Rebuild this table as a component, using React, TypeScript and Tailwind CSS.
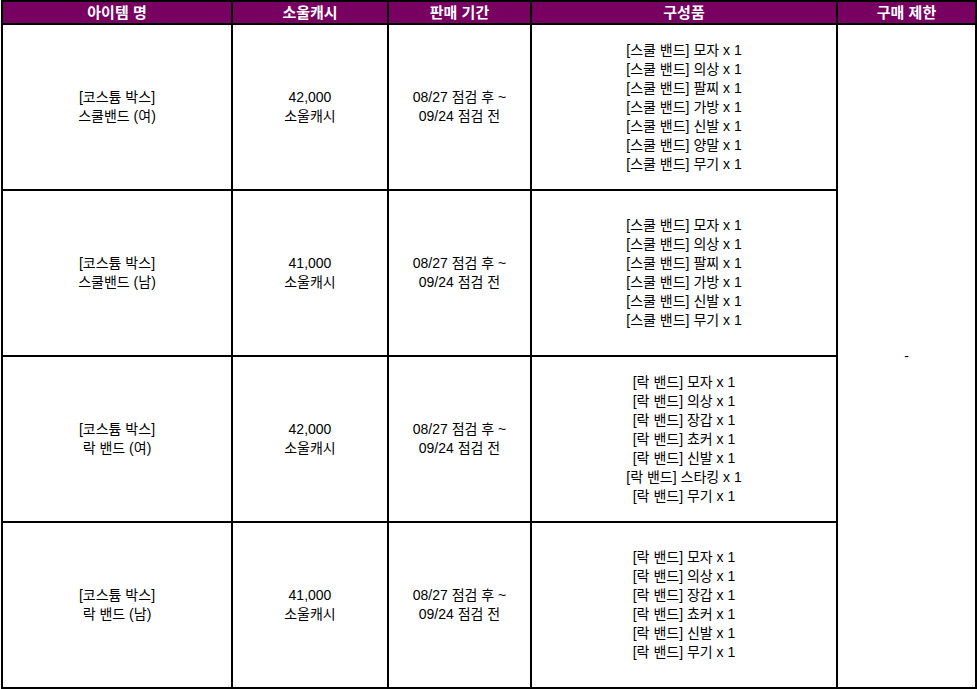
const rows = [
  {
    name: ["[코스튬 박스]", "스쿨밴드 (여)"],
    price: "42,000",
    items: ["[스쿨 밴드] 모자 x 1", "[스쿨 밴드] 의상 x 1", "[스쿨 밴드] 팔찌 x 1", "[스쿨 밴드] 가방 x 1", "[스쿨 밴드] 신발 x 1", "[스쿨 밴드] 양말 x 1", "[스쿨 밴드] 무기 x 1"],
  },
  {
    name: ["[코스튬 박스]", "스쿨밴드 (남)"],
    price: "41,000",
    items: ["[스쿨 밴드] 모자 x 1", "[스쿨 밴드] 의상 x 1", "[스쿨 밴드] 팔찌 x 1", "[스쿨 밴드] 가방 x 1", "[스쿨 밴드] 신발 x 1", "[스쿨 밴드] 무기 x 1"],
  },
  {
    name: ["[코스튬 박스]", "락 밴드 (여)"],
    price: "42,000",
    items: ["[락 밴드] 모자 x 1", "[락 밴드] 의상 x 1", "[락 밴드] 장갑 x 1", "[락 밴드] 쵸커 x 1", "[락 밴드] 신발 x 1", "[락 밴드] 스타킹 x 1", "[락 밴드] 무기 x 1"],
  },
  {
    name: ["[코스튬 박스]", "락 밴드 (남)"],
    price: "41,000",
    items: ["[락 밴드] 모자 x 1", "[락 밴드] 의상 x 1", "[락 밴드] 장갑 x 1", "[락 밴드] 쵸커 x 1", "[락 밴드] 신발 x 1", "[락 밴드] 무기 x 1"],
  },
]

const headers = ["아이템 명", "소울캐시", "판매 기간", "구성품", "구매 제한"]
const widths = ["w-[230px]", "w-[156px]", "w-[143px]", "w-[306px]", "w-[139px]"]

export default function App() {
  return (
    <div className="bg-white min-h-[689px] pl-px font-['Liberation_Sans','Noto_Sans_CJK_KR',sans-serif] text-[14px] leading-[19px] text-black">
      <table className="border-collapse table-fixed w-[975px]">
        <thead>
          <tr>
            {headers.map((h, i) => (
              <th
                key={h}
                className={`${widths[i]} h-[23px] border-2 border-black bg-[#780060] text-white text-[15px] font-bold leading-[18px] p-0`}
              >
                {h}
              </th>
            ))}
          </tr>
        </thead>
        <tbody>
          {rows.map((r, idx) => (
            <tr key={idx}>
              <td className="h-[166px] border-2 border-black text-center align-middle p-0">
                {r.name.map((n) => (
                  <div key={n}>{n}</div>
                ))}
              </td>
              <td className="border-2 border-black text-center align-middle p-0">
                <div>{r.price}</div>
                <div>소울캐시</div>
              </td>
              <td className="border-2 border-black text-center align-middle p-0">
                <div>08/27 점검 후 ~</div>
                <div>09/24 점검 전</div>
              </td>
              <td className="border-2 border-black text-center align-middle p-0">
                {r.items.map((it) => (
                  <div key={it}>{it}</div>
                ))}
              </td>
              {idx === 0 && (
                <td rowSpan={4} className="border-2 border-black text-center align-middle p-0">
                  -
                </td>
              )}
            </tr>
          ))}
        </tbody>
      </table>
    </div>
  )
}
